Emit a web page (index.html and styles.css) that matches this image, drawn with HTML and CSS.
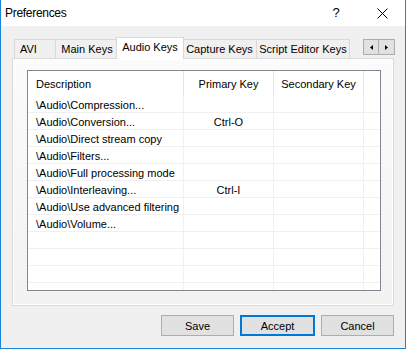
FILE: index.html
```html
<!DOCTYPE html>
<html lang="en">

<head>
    <meta charset="UTF-8">
    <link rel="stylesheet" href="styles.css">
</head>

<body>
    <div class="window">
        <div class="titlebar">
            <span class="title">Preferences</span>
            <span class="caption-btn help">?</span>
            <span class="caption-btn close">
                <svg width="11" height="11" viewBox="0 0 11 11">
                    <path d="M0.5 0.5L10.5 10.5M10.5 0.5L0.5 10.5" stroke="#000" stroke-width="1" />
                </svg>
            </span>
        </div>

        <div class="dialog-body">
            <div class="tabstrip">
                <div class="tab tab-avi">AVI</div>
                <div class="tab tab-main">Main Keys</div>
                <div class="tab tab-audio active">Audio Keys</div>
                <div class="tab tab-capture">Capture Keys</div>
                <div class="tab tab-script">Script Editor Keys</div>
                <div class="tab-scroll">
                    <span class="scroll-btn">
                        <svg width="3" height="5" viewBox="0 0 3 5"><path d="M3 0V5L0 2.5Z" fill="#000" /></svg>
                    </span>
                    <span class="scroll-btn">
                        <svg width="3" height="5" viewBox="0 0 3 5"><path d="M0 0V5L3 2.5Z" fill="#000" /></svg>
                    </span>
                </div>
            </div>

            <div class="tab-pane">
                <div class="listview">
                    <div class="lv-row lv-header">
                        <div class="lv-cell">Description</div>
                        <div class="lv-cell center">Primary Key</div>
                        <div class="lv-cell center">Secondary Key</div>
                        <div class="lv-cell"></div>
                    </div>
                    <div id="listBody" class="lv-body"></div>
                </div>
            </div>

            <div class="button-row">
                <button class="dlg-button">Save</button>
                <button class="dlg-button default">Accept</button>
                <button class="dlg-button">Cancel</button>
            </div>
        </div>
    </div>

    <script>
        const commands = [
            ['\\Audio\\Compression...', ''],
            ['\\Audio\\Conversion...', 'Ctrl-O'],
            ['\\Audio\\Direct stream copy', ''],
            ['\\Audio\\Filters...', ''],
            ['\\Audio\\Full processing mode', ''],
            ['\\Audio\\Interleaving...', 'Ctrl-I'],
            ['\\Audio\\Use advanced filtering', ''],
            ['\\Audio\\Volume...', '']
        ];

        const listBody = document.getElementById('listBody');

        // empty rows keep the grid lines going to the bottom
        for (let i = 0; i < 12; i++) {
            const item = commands[i] || ['', ''];
            listBody.innerHTML += `
                <div class="lv-row">
                    <div class="lv-cell">${item[0]}</div>
                    <div class="lv-cell center">${item[1]}</div>
                    <div class="lv-cell"></div>
                    <div class="lv-cell"></div>
                </div>
            `;
        }
    </script>
</body>

</html>
```

FILE: styles.css
```css
body {
    margin: 0;
    font-family: "Liberation Sans", Arial, sans-serif;
    font-size: 11px;
    color: #000;
}

.window {
    width: 406px;
    height: 349px;
    box-sizing: border-box;
    border: 1px solid #1883d7;
    border-top: none;
    background: #f0f0f0;
    display: flex;
    flex-direction: column;
}

.titlebar {
    height: 26px;
    background: #fff;
    display: flex;
    align-items: center;
    flex-shrink: 0;
}

.title {
    flex: 1;
    padding-left: 4px;
    font-size: 12px;
    letter-spacing: -0.3px;
}

.caption-btn {
    width: 46px;
    height: 26px;
    display: flex;
    align-items: center;
    justify-content: center;
}

.help {
    font-size: 13px;
    padding-bottom: 1px;
    box-sizing: border-box;
}

.dialog-body {
    flex: 1;
    display: flex;
    flex-direction: column;
}

/* tabs */
.tabstrip {
    display: flex;
    align-items: flex-end;
    height: 21px;
    margin: 11px 10px 0 13px;
}

.tab {
    box-sizing: border-box;
    height: 19px;
    line-height: 18px;
    text-align: center;
    white-space: nowrap;
    overflow: hidden;
    border-top: 1px solid #d9d9d9;
    border-left: 1px solid #d9d9d9;
    background: #f0f0f0;
}

.tab-avi {
    width: 41px;
    text-align: left;
    padding-left: 5px;
}

.tab-main {
    width: 63px;
}

.tab-capture {
    width: 74px;
}

.tab-script {
    width: 94px;
    border-right: 1px solid #d9d9d9;
}

.tab.active {
    position: relative;
    z-index: 1;
    width: 68px;
    height: 22px;
    line-height: 19px;
    padding-bottom: 2px;
    margin: 0 -2px -1px;
    border-right: 1px solid #d9d9d9;
    background: #fff;
}

.tab-scroll {
    margin-left: auto;
    align-self: flex-start;
    margin-top: 2px;
    display: flex;
}

.scroll-btn {
    width: 16px;
    height: 16px;
    box-sizing: border-box;
    border: 1px solid #adadad;
    background: #e1e1e1;
    display: flex;
    align-items: center;
    justify-content: center;
}

.scroll-btn + .scroll-btn {
    border-left: none;
}

/* pane */
.tab-pane {
    box-sizing: border-box;
    width: 382px;
    height: 248px;
    margin-left: 11px;
    border: 1px solid #d9d9d9;
    box-shadow: inset 0 0 0 1px #fff;
    background: linear-gradient(#fbfbfb, #f2f2f2);
    padding: 11px 12px 14px 14px;
}

.listview {
    box-sizing: border-box;
    width: 354px;
    height: 221px;
    border: 1px solid #828790;
    background: #fff;
    overflow: hidden;
}

.lv-row {
    display: grid;
    grid-template-columns: 156px 90px 90px 1fr;
    height: 17px;
    box-sizing: border-box;
    border-bottom: 1px solid #f0f0f0;
}

.lv-cell {
    box-sizing: border-box;
    border-right: 1px solid #f0f0f0;
    padding-left: 8px;
    line-height: 18px;
    white-space: nowrap;
    overflow: hidden;
}

.lv-cell.center {
    padding-left: 0;
    text-align: center;
}

.lv-cell:last-child {
    border-right: none;
}

.lv-header {
    height: 25px;
    border-bottom: none;
}

.lv-header .lv-cell {
    line-height: 26px;
    border-right-color: #e5e5e5;
}

.lv-header .lv-cell:nth-child(3) {
    border-right: 1px solid #e5e5e5;
}

/* buttons */
.button-row {
    display: flex;
    justify-content: flex-end;
    gap: 6px;
    margin: 9px 11px 0 0;
}

.dlg-button {
    box-sizing: border-box;
    width: 73px;
    height: 21px;
    padding: 0;
    font-family: inherit;
    font-size: 11px;
    color: #000;
    background: #e1e1e1;
    border: 1px solid #adadad;
}

.dlg-button.default {
    width: 75px;
    border: 2px solid #0078d7;
}
```
